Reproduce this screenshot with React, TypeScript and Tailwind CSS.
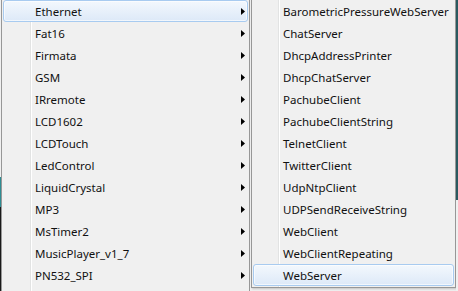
import React from "react";

const leftItems = [
  "Ethernet",
  "Fat16",
  "Firmata",
  "GSM",
  "IRremote",
  "LCD1602",
  "LCDTouch",
  "LedControl",
  "LiquidCrystal",
  "MP3",
  "MsTimer2",
  "MusicPlayer_v1_7",
  "PN532_SPI",
];

const rightItems = [
  "BarometricPressureWebServer",
  "ChatServer",
  "DhcpAddressPrinter",
  "DhcpChatServer",
  "PachubeClient",
  "PachubeClientString",
  "TelnetClient",
  "TwitterClient",
  "UdpNtpClient",
  "UDPSendReceiveString",
  "WebClient",
  "WebClientRepeating",
  "WebServer",
];

function Arrow() {
  return (
    <svg width="4" height="7" viewBox="0 0 4 7" className="block">
      <path d="M0 0 L4 3.5 L0 7 Z" fill="#000" />
    </svg>
  );
}

function Row({
  label,
  active,
  arrow,
  pad,
}: {
  label: string;
  active: boolean;
  arrow: boolean;
  pad: "left" | "right";
}) {
  return (
    <div
      className={
        "h-[22px] flex items-center rounded-[3px] border " +
        (active
          ? "border-[#a8cbf0] bg-gradient-to-b from-[#f3f8fd] to-[#dde9f8] shadow-[inset_0_0_0_1px_rgba(255,255,255,0.6)]"
          : "border-transparent")
      }
    >
      <span
        className={
          "flex-1 pt-[2px] text-[11.5px] leading-none text-[#111] " +
          (pad === "left" ? "pl-[31px]" : "pl-[29px]")
        }
      >
        {label}
      </span>
      {arrow && (
        <span className="w-[6px] flex items-center">
          <Arrow />
        </span>
      )}
    </div>
  );
}

export default function App() {
  return (
    <div
      className="w-[458px] h-[291px] overflow-hidden bg-[#f0f0f0] flex items-start"
      style={{ fontFamily: '"Noto Sans", "Open Sans", sans-serif' }}
    >
      {/* background window edge at left */}
      <div className="w-[1px] h-[291px] flex flex-col">
        <div className="h-[177px] bg-[#f0f0f0]" />
        <div className="h-[30px] bg-[#2e8c92]" />
        <div className="flex-1 bg-[#1a1a1a]" />
      </div>

      {/* left menu */}
      <div className="w-[249px] h-[300px] mt-[-1px] shrink-0 border border-[#979797] px-[1px] flex flex-col bg-[linear-gradient(to_right,#f0f0f0_28px,#e2e3e3_28px,#e2e3e3_29px,#ffffff_29px,#ffffff_30px,#f0f0f0_30px)]">
        {leftItems.map((l, i) => (
          <Row key={l} label={l} active={i === 0} arrow pad="left" />
        ))}
      </div>

      {/* gap between menus */}
      <div className="w-[1px] shrink-0" />

      {/* submenu */}
      <div className="w-[205px] h-[291px] mt-[-3px] shrink-0 border border-[#979797] pt-[2px] px-[1px] flex flex-col bg-[linear-gradient(to_right,#f0f0f0_26px,#e2e3e3_26px,#e2e3e3_27px,#ffffff_27px,#ffffff_28px,#f0f0f0_28px)] shadow-[1px_1px_2px_rgba(0,0,0,0.2)]">
        {rightItems.map((l, i) => (
          <Row key={l} label={l} active={i === 12} arrow={false} pad="right" />
        ))}
      </div>

      {/* background window edge at right */}
      <div className="flex-1 h-[291px] flex flex-col">
        <div className="h-[200px] bg-[#2a5a60]" />
        <div className="flex-1 bg-[#f0f0f0]" />
      </div>
    </div>
  );
}
